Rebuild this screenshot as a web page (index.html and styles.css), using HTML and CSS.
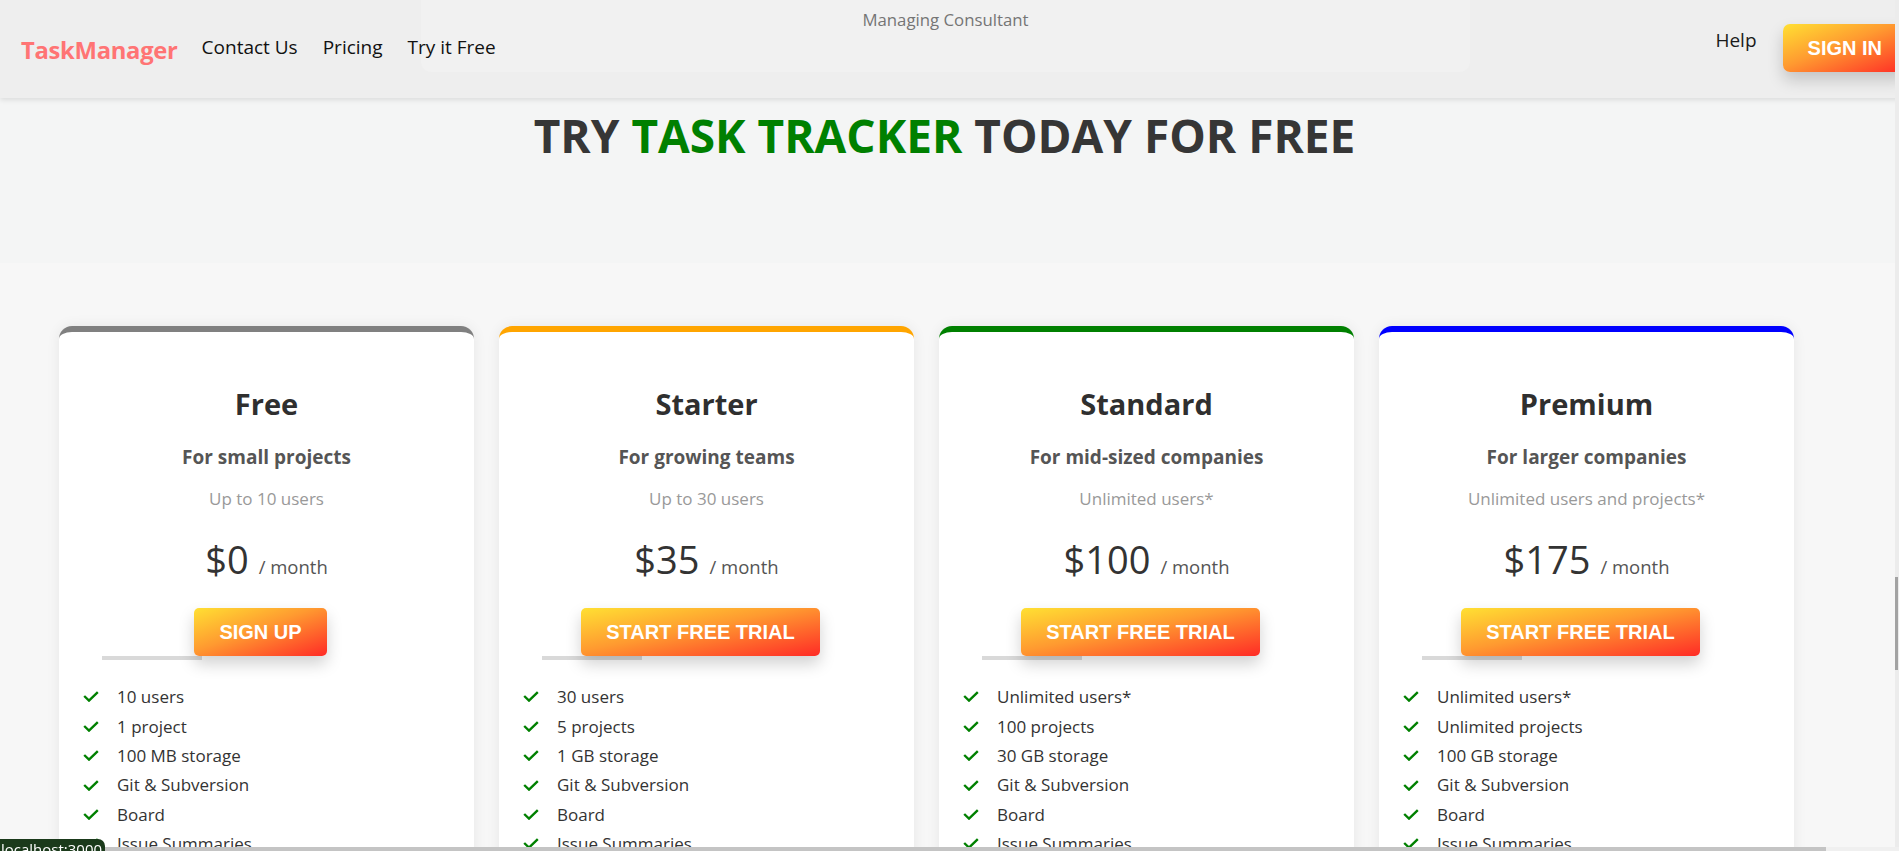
FILE: index.html
```html
<!DOCTYPE html>
<html lang="en">
<head>
<meta charset="utf-8">
<title>TaskManager – Pricing</title>
<link rel="stylesheet" href="styles.css">
</head>
<body>
<div class="page">
  <header class="topbar">
    <div class="consultant-panel"><span>Managing Consultant</span></div>
    <a class="logo" href="#">TaskManager</a>
    <nav class="main-nav">
      <a href="#">Contact Us</a>
      <a href="#">Pricing</a>
      <a href="#">Try it Free</a>
    </nav>
    <div class="topbar-right">
      <a class="help" href="#">Help</a>
      <a class="btn btn-signin" href="#">SIGN IN</a>
    </div>
  </header>

  <section class="hero">
    <h1>TRY <span class="accent">TASK TRACKER</span> TODAY FOR FREE</h1>
  </section>

  <section class="pricing">
    <div class="plans">
      <article class="plan plan-free">
        <h2>Free</h2>
        <p class="tagline">For small projects</p>
        <p class="limit">Up to 10 users</p>
        <p class="price"><span class="amount">$0</span><span class="per">/ month</span></p>
        <a class="btn btn-plan" href="#">SIGN UP</a>
        <div class="underbar"></div>
        <ul class="features">
          <li><svg viewBox="0 0 16 11"><polyline points="1.2,5 6,9.6 14.8,1.2"/></svg>10 users</li>
          <li><svg viewBox="0 0 16 11"><polyline points="1.2,5 6,9.6 14.8,1.2"/></svg>1 project</li>
          <li><svg viewBox="0 0 16 11"><polyline points="1.2,5 6,9.6 14.8,1.2"/></svg>100 MB storage</li>
          <li><svg viewBox="0 0 16 11"><polyline points="1.2,5 6,9.6 14.8,1.2"/></svg>Git &amp; Subversion</li>
          <li><svg viewBox="0 0 16 11"><polyline points="1.2,5 6,9.6 14.8,1.2"/></svg>Board</li>
          <li><svg viewBox="0 0 16 11"><polyline points="1.2,5 6,9.6 14.8,1.2"/></svg>Issue Summaries</li>
        </ul>
      </article>

      <article class="plan plan-starter">
        <h2>Starter</h2>
        <p class="tagline">For growing teams</p>
        <p class="limit">Up to 30 users</p>
        <p class="price"><span class="amount">$35</span><span class="per">/ month</span></p>
        <a class="btn btn-plan" href="#">START FREE TRIAL</a>
        <div class="underbar"></div>
        <ul class="features">
          <li><svg viewBox="0 0 16 11"><polyline points="1.2,5 6,9.6 14.8,1.2"/></svg>30 users</li>
          <li><svg viewBox="0 0 16 11"><polyline points="1.2,5 6,9.6 14.8,1.2"/></svg>5 projects</li>
          <li><svg viewBox="0 0 16 11"><polyline points="1.2,5 6,9.6 14.8,1.2"/></svg>1 GB storage</li>
          <li><svg viewBox="0 0 16 11"><polyline points="1.2,5 6,9.6 14.8,1.2"/></svg>Git &amp; Subversion</li>
          <li><svg viewBox="0 0 16 11"><polyline points="1.2,5 6,9.6 14.8,1.2"/></svg>Board</li>
          <li><svg viewBox="0 0 16 11"><polyline points="1.2,5 6,9.6 14.8,1.2"/></svg>Issue Summaries</li>
        </ul>
      </article>

      <article class="plan plan-standard">
        <h2>Standard</h2>
        <p class="tagline">For mid-sized companies</p>
        <p class="limit">Unlimited users*</p>
        <p class="price"><span class="amount">$100</span><span class="per">/ month</span></p>
        <a class="btn btn-plan" href="#">START FREE TRIAL</a>
        <div class="underbar"></div>
        <ul class="features">
          <li><svg viewBox="0 0 16 11"><polyline points="1.2,5 6,9.6 14.8,1.2"/></svg>Unlimited users*</li>
          <li><svg viewBox="0 0 16 11"><polyline points="1.2,5 6,9.6 14.8,1.2"/></svg>100 projects</li>
          <li><svg viewBox="0 0 16 11"><polyline points="1.2,5 6,9.6 14.8,1.2"/></svg>30 GB storage</li>
          <li><svg viewBox="0 0 16 11"><polyline points="1.2,5 6,9.6 14.8,1.2"/></svg>Git &amp; Subversion</li>
          <li><svg viewBox="0 0 16 11"><polyline points="1.2,5 6,9.6 14.8,1.2"/></svg>Board</li>
          <li><svg viewBox="0 0 16 11"><polyline points="1.2,5 6,9.6 14.8,1.2"/></svg>Issue Summaries</li>
        </ul>
      </article>

      <article class="plan plan-premium">
        <h2>Premium</h2>
        <p class="tagline">For larger companies</p>
        <p class="limit">Unlimited users and projects*</p>
        <p class="price"><span class="amount">$175</span><span class="per">/ month</span></p>
        <a class="btn btn-plan" href="#">START FREE TRIAL</a>
        <div class="underbar"></div>
        <ul class="features">
          <li><svg viewBox="0 0 16 11"><polyline points="1.2,5 6,9.6 14.8,1.2"/></svg>Unlimited users*</li>
          <li><svg viewBox="0 0 16 11"><polyline points="1.2,5 6,9.6 14.8,1.2"/></svg>Unlimited projects</li>
          <li><svg viewBox="0 0 16 11"><polyline points="1.2,5 6,9.6 14.8,1.2"/></svg>100 GB storage</li>
          <li><svg viewBox="0 0 16 11"><polyline points="1.2,5 6,9.6 14.8,1.2"/></svg>Git &amp; Subversion</li>
          <li><svg viewBox="0 0 16 11"><polyline points="1.2,5 6,9.6 14.8,1.2"/></svg>Board</li>
          <li><svg viewBox="0 0 16 11"><polyline points="1.2,5 6,9.6 14.8,1.2"/></svg>Issue Summaries</li>
        </ul>
      </article>
    </div>
  </section>
</div>

<div class="vscroll"><div class="vthumb"></div></div>
<div class="hscroll"><div class="hthumb"></div></div>
<div class="status-bubble">localhost:3000</div>
</body>
</html>
```

FILE: styles.css
```css
html, body {
  margin: 0;
  padding: 0;
  overflow: hidden;
  height: 100%;
}

body {
  font-family: "Segoe UI", "Open Sans", "Noto Sans", sans-serif;
  color: #333;
  background: #f7f7f7;
}

a {
  text-decoration: none;
  color: inherit;
}

.page {
  width: 1927px;
}

/* ---------- top bar ---------- */
.topbar {
  position: relative;
  z-index: 2;
  display: flex;
  align-items: flex-start;
  height: 98px;
  padding: 0 20px 0 20px;
  box-sizing: border-box;
  background: #eeeeee;
  box-shadow: 0 2px 5px rgba(0, 0, 0, 0.10);
}

.consultant-panel {
  position: absolute;
  left: 421px;
  top: 0;
  width: 1049px;
  height: 72px;
  background: #f1f1f1;
  border-radius: 0 0 10px 10px;
  z-index: 0;
  display: flex;
  justify-content: center;
}

.consultant-panel span {
  margin-top: 8px;
  font-size: 16.8px;
  line-height: 24px;
  color: #757575;
}

.logo {
  position: relative;
  z-index: 1;
  margin-top: 33px;
  margin-left: 1px;
  font-size: 23.8px;
  line-height: 34px;
  font-weight: 700;
  color: #ff7474;
  letter-spacing: -0.3px;
}

.main-nav {
  position: relative;
  z-index: 1;
  display: flex;
  gap: 25px;
  margin-top: 34px;
  margin-left: 24px;
}

.main-nav a {
  font-size: 19px;
  line-height: 26px;
  color: #111;
}

.topbar-right {
  position: relative;
  z-index: 1;
  margin-left: auto;
  display: flex;
  align-items: flex-start;
  gap: 26px;
}

.help {
  margin-top: 27px;
  font-size: 19px;
  line-height: 26px;
  color: #1a1a1a;
}

.btn {
  display: inline-block;
  box-sizing: border-box;
  height: 48px;
  padding: 0 25px;
  line-height: 48px;
  font-family: "Liberation Sans", Arial, sans-serif;
  font-weight: 700;
  color: #fff;
  background: linear-gradient(to bottom right, #ffe033 0%, #ff9a30 45%, #ff2b26 100%);
  box-shadow: 0 8px 16px rgba(0, 0, 0, 0.18);
}

.btn-signin {
  margin-top: 24px;
  font-size: 20px;
  border-radius: 7px;
}

/* ---------- hero ---------- */
.hero {
  height: 165px;
  box-sizing: border-box;
  padding-top: 9px;
  padding-right: 38px;
  background: #f4f5f5;
}

.hero h1 {
  margin: 0;
  text-align: center;
  font-size: 46px;
  line-height: 56px;
  font-weight: 700;
  color: #363636;
}

.hero .accent {
  color: #008000;
}

/* ---------- pricing ---------- */
.pricing {
  padding: 63px 0 80px 59px;
  background: #f7f7f7;
}

.plans {
  display: grid;
  grid-template-columns: repeat(4, 415px);
  gap: 25px;
}

.plan {
  background: #fff;
  border-top: 6px solid #808080;
  border-radius: 13px 13px 0 0;
  padding: 54px 24px 40px;
  box-shadow: 0 0 14px rgba(0, 0, 0, 0.07);
  text-align: center;
  min-height: 600px;
}

.plan-starter  { border-top-color: #ffa500; }
.plan-standard { border-top-color: #008000; }
.plan-premium  { border-top-color: #0000ff; }

.plan h2 {
  margin: 0;
  font-size: 29px;
  line-height: 36px;
  font-weight: 700;
  color: #2f2f2f;
}

.tagline {
  margin: 22px 0 0;
  font-size: 19px;
  line-height: 26px;
  font-weight: 700;
  color: #555;
}

.limit {
  margin: 17px 0 0;
  font-size: 17px;
  line-height: 24px;
  color: #999;
}

.price {
  margin: 23.5px 0 0;
  line-height: 48px;
  color: #333;
}

.amount {
  font-size: 38px;
}

.per {
  margin-left: 10px;
  font-size: 18.5px;
  color: #555;
}

.btn-plan {
  margin-top: 16px;
  margin-right: 12px;
  font-size: 20px;
  border-radius: 5px;
}

.underbar {
  width: 100px;
  height: 4px;
  margin-left: 19px;
  background: #d9d9d9;
}

.features {
  list-style: none;
  margin: 22.6px 0 0;
  padding: 0;
  text-align: left;
}

.features li {
  display: flex;
  align-items: center;
  font-size: 17px;
  line-height: 29.4px;
  color: #333;
}

.features svg {
  width: 16px;
  height: 11px;
  margin-right: 18px;
  flex: none;
  fill: none;
  stroke: #008000;
  stroke-width: 2.4;
  stroke-linecap: butt;
  stroke-linejoin: miter;
}

/* ---------- browser chrome overlays ---------- */
.vscroll {
  position: fixed;
  top: 0;
  right: 0;
  width: 4px;
  height: 847px;
  background: #ececec;
  z-index: 10;
}

.vthumb {
  margin-top: 577px;
  width: 3px;
  height: 93px;
  background: #a3a3a3;
}

.hscroll {
  position: fixed;
  left: 0;
  bottom: 0;
  width: 1899px;
  height: 4px;
  background: #f0f0f0;
  z-index: 10;
}

.hthumb {
  width: 1826px;
  height: 4px;
  background: #c4c4c4;
}

.status-bubble {
  position: fixed;
  left: 0;
  top: 839px;
  z-index: 11;
  width: 105px;
  box-sizing: border-box;
  padding: 0 0 0 1px;
  height: 20px;
  overflow: hidden;
  background: #1b3a1b;
  border-radius: 0 7px 0 0;
  color: #fff;
  font-family: "Segoe UI", "Open Sans", sans-serif;
  font-size: 15px;
  line-height: 20px;
  white-space: nowrap;
}
```
